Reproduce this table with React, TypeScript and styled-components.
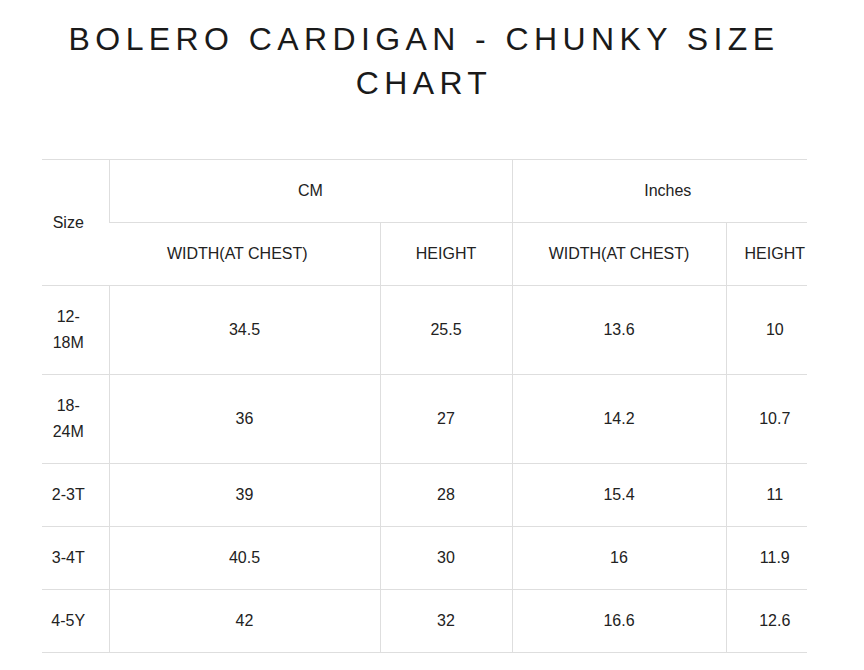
import React from "react";
import styled, { createGlobalStyle } from "styled-components";

const GlobalStyle = createGlobalStyle`
  html, body { margin: 0; padding: 0; background: #ffffff; }
  body { font-family: "Liberation Sans", Arial, sans-serif; color: #222222; }
`;

const Page = styled.main`
  width: 765px;
  margin-left: 42px;
  padding-top: 17px;
`;

const Title = styled.h1`
  margin: 0 0 54px;
  padding-right: 1px;
  font-family: "Liberation Sans", Arial, sans-serif;
  font-weight: 400;
  font-size: 32px;
  line-height: 44px;
  letter-spacing: 5.4px;
  text-align: center;
  color: #1a1a1a;
`;

const Table = styled.table`
  width: 765px;
  table-layout: fixed;
  border-collapse: collapse;
  font-size: 16px;
  line-height: 26px;
  color: #222222;
`;

const Cell = styled.td`
  border-top: 1px solid #dedede;
  border-bottom: 1px solid #dedede;
  text-align: center;
  vertical-align: middle;
  font-weight: 400;
  padding: 18px 8px;
  &:not(:first-child) {
    border-left: 1px solid #dedede;
  }
  &:first-child {
    padding-left: 2px;
    padding-right: 16px;
  }
  &:last-child {
    padding-left: 16px;
    padding-right: 0;
  }
`;

const widths = [67, 271, 132, 214, 81];

const rows = [
  ["12-18M", "34.5", "25.5", "13.6", "10"],
  ["18-24M", "36", "27", "14.2", "10.7"],
  ["2-3T", "39", "28", "15.4", "11"],
  ["3-4T", "40.5", "30", "16", "11.9"],
  ["4-5Y", "42", "32", "16.6", "12.6"],
];

export default function App() {
  return (
    <>
      <GlobalStyle />
      <Page>
        <Title>BOLERO CARDIGAN - CHUNKY SIZE CHART</Title>
        <Table>
          <colgroup>
            {widths.map((w, i) => (
              <col key={i} style={{ width: w }} />
            ))}
          </colgroup>
          <tbody>
            <tr>
              <Cell rowSpan={2}>Size</Cell>
              <Cell colSpan={2}>CM</Cell>
              <Cell colSpan={2}>Inches</Cell>
            </tr>
            <tr>
              <Cell>WIDTH(AT CHEST)</Cell>
              <Cell>HEIGHT</Cell>
              <Cell>WIDTH(AT CHEST)</Cell>
              <Cell>HEIGHT</Cell>
            </tr>
            {rows.map((r) => (
              <tr key={r[0]}>
                {r.map((v, i) => (
                  <Cell key={i}>{v}</Cell>
                ))}
              </tr>
            ))}
          </tbody>
        </Table>
      </Page>
    </>
  );
}
